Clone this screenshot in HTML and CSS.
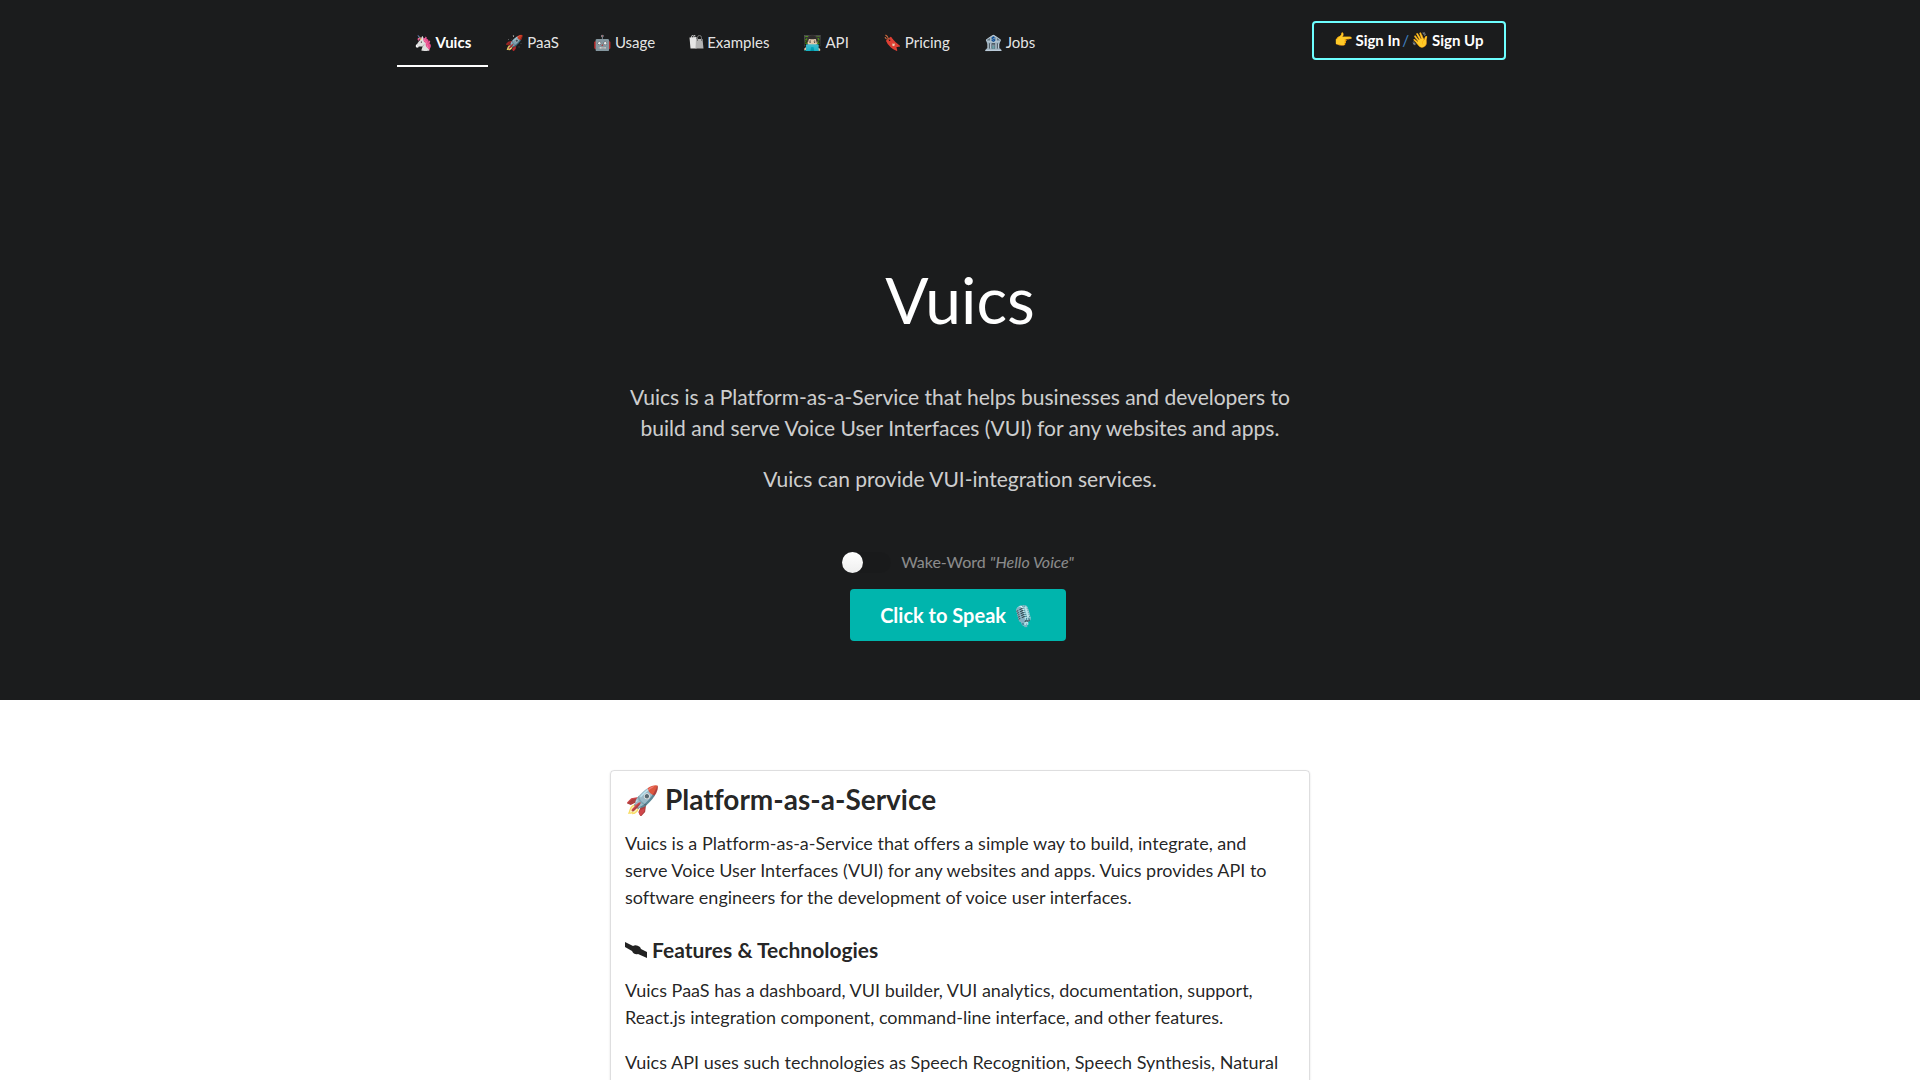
FILE: index.html
```
<!DOCTYPE html>
<html lang="en">
<head>
<meta charset="utf-8">
<title>Vuics</title>
<link rel="stylesheet" href="styles.css">
</head>
<body>
<header class="masthead">
  <div class="container topbar">
    <nav class="menu">
      <a class="item active" href="#"><span>🦄</span>Vuics</a>
      <a class="item" href="#paas"><span>🚀</span>PaaS</a>
      <a class="item" href="#usage"><span>🤖</span>Usage</a>
      <a class="item" href="#examples"><svg class="bags" viewBox="0 0 14 14" aria-hidden="true"><path d="M2 3V2Q2 0 4 0Q5 0 5.500 1.500M4 2.500Q4 0 6 0" fill="none" stroke="#bbb"/><path d="M0 2.500L7 2V13.500H1Z" fill="#e6e6e6"/><path d="M6.500 4H13L14 13.500H6Z" fill="#b4b4b4"/><path d="M8 6V2.500Q8 .5 10 .5T12 2.500V6" fill="none" stroke="#777"/></svg>Examples</a>
      <a class="item" href="#api"><span>👨🏻‍💻</span>API</a>
      <a class="item" href="#pricing"><span>🔖</span>Pricing</a>
      <a class="item" href="#jobs"><span>🏦</span>Jobs</a>
    </nav>
    <button class="sign" type="button"><span>👉</span><span>Sign In</span><span class="slash">/</span><span>👋</span><span>Sign Up</span></button>
  </div>
  <div class="hero">
    <h1>Vuics</h1>
    <p>Vuics is a Platform-as-a-Service that helps businesses and developers to build and serve Voice User Interfaces (VUI) for any websites and apps.</p>
    <p>Vuics can provide VUI-integration services.</p>
    <div class="actions">
      <label class="wake"><input type="checkbox" class="toggle"><span>Wake-Word <i>"Hello Voice"</i></span></label>
      <button class="speak" type="button">Click to Speak 🎙️</button>
    </div>
  </div>
</header>
<main class="content">
  <section class="segment" id="paas">
    <h2><span>🚀</span>Platform-as-a-Service</h2>
    <p>Vuics is a Platform-as-a-Service that offers a simple way to build, integrate, and<br>serve Voice User Interfaces (VUI) for any websites and apps. Vuics provides API to<br>software engineers for the development of voice user interfaces.</p>
    <h3><svg class="satellite" viewBox="0 0 22 18" aria-hidden="true"><path d="M0 1L8 5Q11 3 15 6L16 8L22 11V17L13 13Q9 14 7 10L0 6Z" fill="#222"/></svg>Features &amp; Technologies</h3>
    <p>Vuics PaaS has a dashboard, VUI builder, VUI analytics, documentation, support, React.js integration component, command-line interface, and other features.</p>
    <p>Vuics API uses such technologies as Speech Recognition, Speech Synthesis, Natural</p>
  </section>
</main>
</body>
</html>
```
FILE: styles.css
```
* { box-sizing: border-box; }
html { background: #fff; }
body {
  margin: 0;
  height: 100vh;
  overflow: hidden;
  font: 14px/20px Lato, "Liberation Sans", sans-serif;
  font-variant-ligatures: none;
  color: rgba(0, 0, 0, .87);
}
button { font-family: inherit; cursor: pointer; }
.masthead {
  min-height: 700px;
  padding: 14px 0 59px;
  background: #1b1c1d;
  color: #fff;
}
.container { max-width: 1127px; margin: 0 auto; }
.topbar {
  display: flex;
  justify-content: space-between;
  align-items: flex-start;
  padding: 7px 18px 0 0;
}
.menu { display: flex; }
.item {
  display: flex;
  align-items: center;
  gap: 3px;
  padding: 11px 17px 13px;
  border-bottom: 2px solid transparent;
  color: rgba(255, 255, 255, .9);
  font-size: 15px;
  line-height: 20px;
  text-decoration: none;
}
.item.active { border-color: #fff; color: #fff; font-weight: 700; }
.bags { width: 15px; height: 14px; }
.sign {
  display: flex;
  align-items: center;
  gap: 2px;
  height: 39px;
  padding: 0 20px 2px;
  border: 2px solid #6dffff;
  border-radius: 4px;
  background: transparent;
  color: #fff;
  font-size: 15px;
  font-weight: 700;
}
.slash { color: #4183c4; font-weight: 400; }
.hero {
  display: flex;
  flex-direction: column;
  align-items: center;
  max-width: 700px;
  margin: 0 auto;
  padding-top: 192px;
  text-align: center;
}
.hero h1 { margin: 0 0 40px; font-size: 64px; line-height: 82px; font-weight: 400; }
.hero p { margin: 0 0 20px; font-size: 21px; line-height: 31px; color: rgba(255, 255, 255, .8); }
.actions {
  display: flex;
  flex-direction: column;
  align-items: center;
  gap: 16px;
  padding: 37px 4px 0 0;
}
.wake {
  display: flex;
  align-items: flex-end;
  gap: 10px;
  font-size: 16px;
  line-height: 22px;
  color: rgba(255, 255, 255, .5);
}
.toggle {
  appearance: none;
  display: flex;
  width: 49px;
  height: 21px;
  margin: 0;
  border-radius: 11px;
  background: rgba(0, 0, 0, .05);
}
.toggle::before {
  content: "";
  width: 21px;
  height: 21px;
  border-radius: 50%;
  background: linear-gradient(#fff, #eee);
}
.speak {
  height: 52px;
  padding: 0 30px;
  border: 0;
  border-radius: 4px;
  background: #00b5ad;
  color: #fff;
  font-size: 20px;
  font-weight: 700;
}
.content { max-width: 700px; margin: 70px auto 0; }
.segment {
  padding: 13px 14px;
  border: 1px solid rgba(34, 36, 38, .15);
  border-radius: 4px;
  box-shadow: 0 1px 2px rgba(34, 36, 38, .15);
}
.segment h2, .segment h3 { display: flex; align-items: center; }
.segment h2 { gap: 5px; margin: 0 0 16px; font-size: 28px; line-height: 30px; }
.segment h3 { gap: 5px; margin: 26px 0 14px; font-size: 21px; line-height: 26px; }
.satellite { width: 22px; height: 18px; }
.segment p { margin: 0 0 18px; font-size: 18px; line-height: 27px; }
```
